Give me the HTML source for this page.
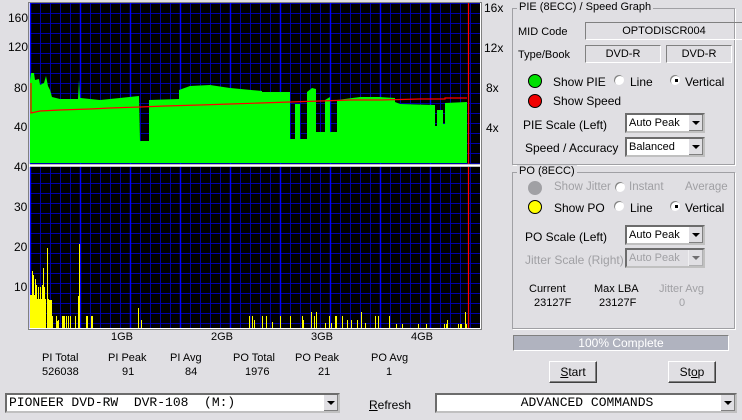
<!DOCTYPE html>
<html><head><meta charset="utf-8"><style>
body{margin:0;width:742px;height:420px;background:#e0dfe3;font-family:"Liberation Sans",sans-serif;font-size:11px;color:#000;position:relative;overflow:hidden}
.a{position:absolute;white-space:nowrap}
.gb{position:absolute;border:1px solid #a0a0a4;box-shadow:1px 1px 0 #fff}
.gl{position:absolute;background:#e0dfe3;padding:0 2px;top:-8px;left:4px}
.fld{position:absolute;border:1px solid;border-color:#808080 #fff #fff #808080;text-align:center;line-height:16px}
.cb{position:absolute;background:#fff;border:2px inset #c0c0c0;height:16px;line-height:16px;padding-left:2px;box-sizing:content-box;white-space:pre}
.cb .ar{position:absolute;right:0;top:0;width:14px;height:16px;background:#e0dfe3;border-left:1px solid #fff;box-shadow:inset -1px -1px 0 #808080}
.cb .ar:after{content:"";position:absolute;left:3px;top:6px;border:4px solid transparent;border-top:4px solid #000;border-bottom:0}
.led{position:absolute;width:12px;height:12px;border-radius:50%;border:1px solid #000}
.rad{position:absolute;width:10px;height:10px;border-radius:50%;background:#fff;box-shadow:inset 1px 1px 0 #808080}
.btn{position:absolute;background:#e0dfe3;border:1px solid;border-color:#fff #404040 #404040 #fff;box-shadow:inset -1px -1px 0 #808080;text-align:center;line-height:20px;font-size:12px}
.dis{color:#a0a0a4}
</style></head><body>
<svg class="a" style="left:0;top:0" width="500" height="335">
<defs>
<pattern id="g" x="30" y="3" width="10" height="10" patternUnits="userSpaceOnUse"><rect width="10" height="10" fill="#000"/><path d="M0 0.5H10M0.5 0V10" stroke="#0000a8" stroke-width="1"/></pattern>
</defs>
<rect x="28.5" y="2.5" width="453" height="327" fill="#fff" stroke="#808080"/>
<rect x="30" y="3" width="450" height="161" fill="url(#g)"/>
<rect x="30" y="167" width="450" height="161" fill="url(#g)"/>
<g stroke="#0000ff" stroke-width="1.4">
<path d="M30.5 3V164M80.5 3V164M130.5 3V164M180.5 3V164M230.5 3V164M280.5 3V164M330.5 3V164M380.5 3V164M430.5 3V164"/>
<path d="M30.5 167V328M80.5 167V328M130.5 167V328M180.5 167V328M230.5 167V328M280.5 167V328M330.5 167V328M380.5 167V328M430.5 167V328"/>
</g>
<path d="M30 164.5H480M30 166.5H480" stroke="#c0c0c0"/>
<polygon fill="#00ff00" points="30,163 30,80 31,73 34,73 35,80 39,79 40,85 44,83 46,76 48,86 50,90 52,97 60,99 78,99 79,80 80,98 100,100 120,98 139,96 140,141 149,141 149,100 179,99 179,90 190,86 210,85 230,88 262,91 262,92 290,92 290,139 295,139 295,104 300,104 300,139 307,139 307,92 312,88 316,89 316,132 325,132 325,100 330,97 330,132 337,132 337,100 360,97 380,97 395,98 395,102 400,104 435,105 435,126 437,126 437,110 443,110 443,124 445,124 445,103 467,102 467,163"/>
<polyline fill="none" stroke="#ff0000" stroke-width="1.2" points="31,83 31,113 40,111 60,110 90,109 110,108 140,107 165,106 200,105 230,104 260,103 290,102 320,101 350,100 380,100 420,99 445,99 445,98 467,98"/>
<path d="M468.5 3V164M468.5 167V328" stroke="#ff0000" stroke-width="1.2"/>
<g stroke="#ffff00" stroke-width="1">
<path d="M30.5 328V295M31.5 328V295M32.5 328V271M33.5 328V275M34.5 328V295M35.5 328V279M36.5 328V285M37.5 328V299M38.5 328V287M39.5 328V299M40.5 328V287M41.5 328V299M42.5 328V285M43.5 328V268M44.5 328V287M45.5 328V299M47.5 328V248M48.5 328V299M49.5 328V300M50.5 328V300M51.5 328V300M52.5 328V316M56.5 328V316M57.5 328V321M58.5 328V320M62.5 328V316M63.5 328V316M64.5 328V316M66.5 328V316M68.5 328V316M70.5 328V316M75.5 328V316M78.5 328V296M79.5 328V244M86.5 328V316M87.5 328V316M91.5 328V316M92.5 328V316M138.5 328V308M141.5 328V320M249.5 328V316M252.5 328V316M254.5 328V320M262.5 328V316M266.5 328V316M272.5 328V322M280.5 328V316M290.5 328V316M302.5 328V316M303.5 328V320M311.5 328V312M314.5 328V316M316.5 328V312M325.5 328V323M329.5 328V316M331.5 328V323M335.5 328V316M336.5 328V316M342.5 328V316M347.5 328V320M351.5 328V320M357.5 328V320M361.5 328V312M365.5 328V323M375.5 328V316M378.5 328V316M389.5 328V316M396.5 328V324M402.5 328V324M418.5 328V324M426.5 328V324M444.5 328V324M446.5 328V324M447.5 328V320M458.5 328V324M460.5 328V324M461.5 328V324M465.5 328V312M466.5 328V324"/>
</g>
</svg>
<div class="a" style="left:8px;top:11px;font-size:12px">160</div>
<div class="a" style="left:8px;top:40px;font-size:12px">120</div>
<div class="a" style="left:14px;top:81px;font-size:12px">80</div>
<div class="a" style="left:14px;top:120px;font-size:12px">40</div>
<div class="a" style="left:14px;top:160px;font-size:12px">40</div>
<div class="a" style="left:14px;top:200px;font-size:12px">30</div>
<div class="a" style="left:14px;top:240px;font-size:12px">20</div>
<div class="a" style="left:14px;top:280px;font-size:12px">10</div>
<div class="a" style="left:484px;top:1px;font-size:12px">16x</div>
<div class="a" style="left:484px;top:41px;font-size:12px">12x</div>
<div class="a" style="left:486px;top:81px;font-size:12px">8x</div>
<div class="a" style="left:486px;top:121px;font-size:12px">4x</div>
<div class="a" style="left:111px;top:331px">1GB</div>
<div class="a" style="left:211px;top:331px">2GB</div>
<div class="a" style="left:311px;top:331px">3GB</div>
<div class="a" style="left:411px;top:331px">4GB</div>
<div class="a" style="left:42px;top:352px">PI Total</div><div class="a" style="left:42px;top:366px">526038</div>
<div class="a" style="left:108px;top:352px">PI Peak</div><div class="a" style="left:122px;top:366px">91</div>
<div class="a" style="left:170px;top:352px">PI Avg</div><div class="a" style="left:185px;top:366px">84</div>
<div class="a" style="left:233px;top:352px">PO Total</div><div class="a" style="left:245px;top:366px">1976</div>
<div class="a" style="left:295px;top:352px">PO Peak</div><div class="a" style="left:318px;top:366px">21</div>
<div class="a" style="left:371px;top:352px">PO Avg</div><div class="a" style="left:386px;top:366px">1</div>

<div class="gb" style="left:512px;top:8px;width:221px;height:155px"><span class="gl">PIE (8ECC) / Speed Graph</span></div>
<div class="a" style="left:518px;top:26px">MID Code</div>
<div class="fld" style="left:585px;top:22px;width:156px">OPTODISCR004</div>
<div class="a" style="left:518px;top:49px">Type/Book</div>
<div class="fld" style="left:585px;top:45px;width:74px">DVD-R</div>
<div class="fld" style="left:666px;top:45px;width:64px">DVD-R</div>
<div class="led" style="left:528px;top:74px;background:#00e000"></div>
<div class="a" style="left:553px;top:75px;font-size:12px">Show PIE</div>
<div class="rad" style="left:614px;top:75px"></div><div class="a" style="left:630px;top:75px;font-size:12px">Line</div>
<div class="rad" style="left:670px;top:75px"></div><div class="a" style="left:675px;top:79px;width:3px;height:3px;background:#000"></div><div class="a" style="left:685px;top:75px;font-size:12px">Vertical</div>
<div class="led" style="left:528px;top:94px;background:#f00000"></div>
<div class="a" style="left:553px;top:94px;font-size:12px">Show Speed</div>
<div class="a" style="left:523px;top:118px;font-size:12px">PIE Scale (Left)</div>
<div class="cb" style="left:625px;top:113px;width:74px">Auto Peak<span class="ar"></span></div>
<div class="a" style="left:525px;top:141px;font-size:12px">Speed / Accuracy</div>
<div class="cb" style="left:625px;top:137px;width:74px">Balanced<span class="ar"></span></div>

<div class="gb" style="left:512px;top:172px;width:221px;height:155px"><span class="gl">PO (8ECC)</span></div>
<div class="led" style="left:528px;top:181px;background:#a0a0a4;border-color:#a0a0a4"></div>
<div class="a dis" style="left:554px;top:181px;font-size:11.5px">Show Jitter</div>
<div class="rad" style="left:615px;top:182px"></div><div class="a dis" style="left:629px;top:181px;font-size:11.5px">Instant</div>
<div class="a dis" style="left:685px;top:181px;font-size:11.5px">Average</div>
<div class="led" style="left:528px;top:200px;background:#ffff00"></div>
<div class="a" style="left:554px;top:201px;font-size:12px">Show PO</div>
<div class="rad" style="left:614px;top:201px"></div><div class="a" style="left:630px;top:201px;font-size:12px">Line</div>
<div class="rad" style="left:670px;top:201px"></div><div class="a" style="left:675px;top:205px;width:3px;height:3px;background:#000"></div><div class="a" style="left:685px;top:201px;font-size:12px">Vertical</div>
<div class="a" style="left:525px;top:230px;font-size:12px">PO Scale (Left)</div>
<div class="cb" style="left:625px;top:225px;width:74px">Auto Peak<span class="ar"></span></div>
<div class="a dis" style="left:525px;top:253px;font-size:12px">Jitter Scale (Right)</div>
<div class="cb dis" style="left:625px;top:248px;width:74px;background:#e0dfe3">Auto Peak<span class="ar" style="opacity:.5"></span></div>
<div class="a" style="left:529px;top:283px">Current</div><div class="a" style="left:534px;top:297px">23127F</div>
<div class="a" style="left:594px;top:283px">Max LBA</div><div class="a" style="left:599px;top:297px">23127F</div>
<div class="a dis" style="left:659px;top:283px">Jitter Avg</div><div class="a dis" style="left:679px;top:297px">0</div>

<div class="a" style="left:513px;top:335px;width:214px;height:14px;background:#b0b3bf;border:1px solid;border-color:#808080 #fff #fff #808080;color:#fff;text-align:center;line-height:14px;font-size:12px">100% Complete</div>
<div class="btn" style="left:549px;top:361px;width:46px;height:20px"><u>S</u>tart</div>
<div class="btn" style="left:668px;top:361px;width:46px;height:20px">St<u>o</u>p</div>

<div class="cb" style="left:5px;top:393px;width:329px;font-family:'Liberation Mono',monospace;font-size:13px">PIONEER DVD-RW  DVR-108  (M:)<span class="ar"></span></div>
<div class="a" style="left:369px;top:398px;font-size:12px"><u>R</u>efresh</div>
<div class="cb" style="left:435px;top:393px;width:296px;font-family:'Liberation Mono',monospace;font-size:13px;text-align:center">ADVANCED COMMANDS<span class="ar"></span></div>
</body></html>
